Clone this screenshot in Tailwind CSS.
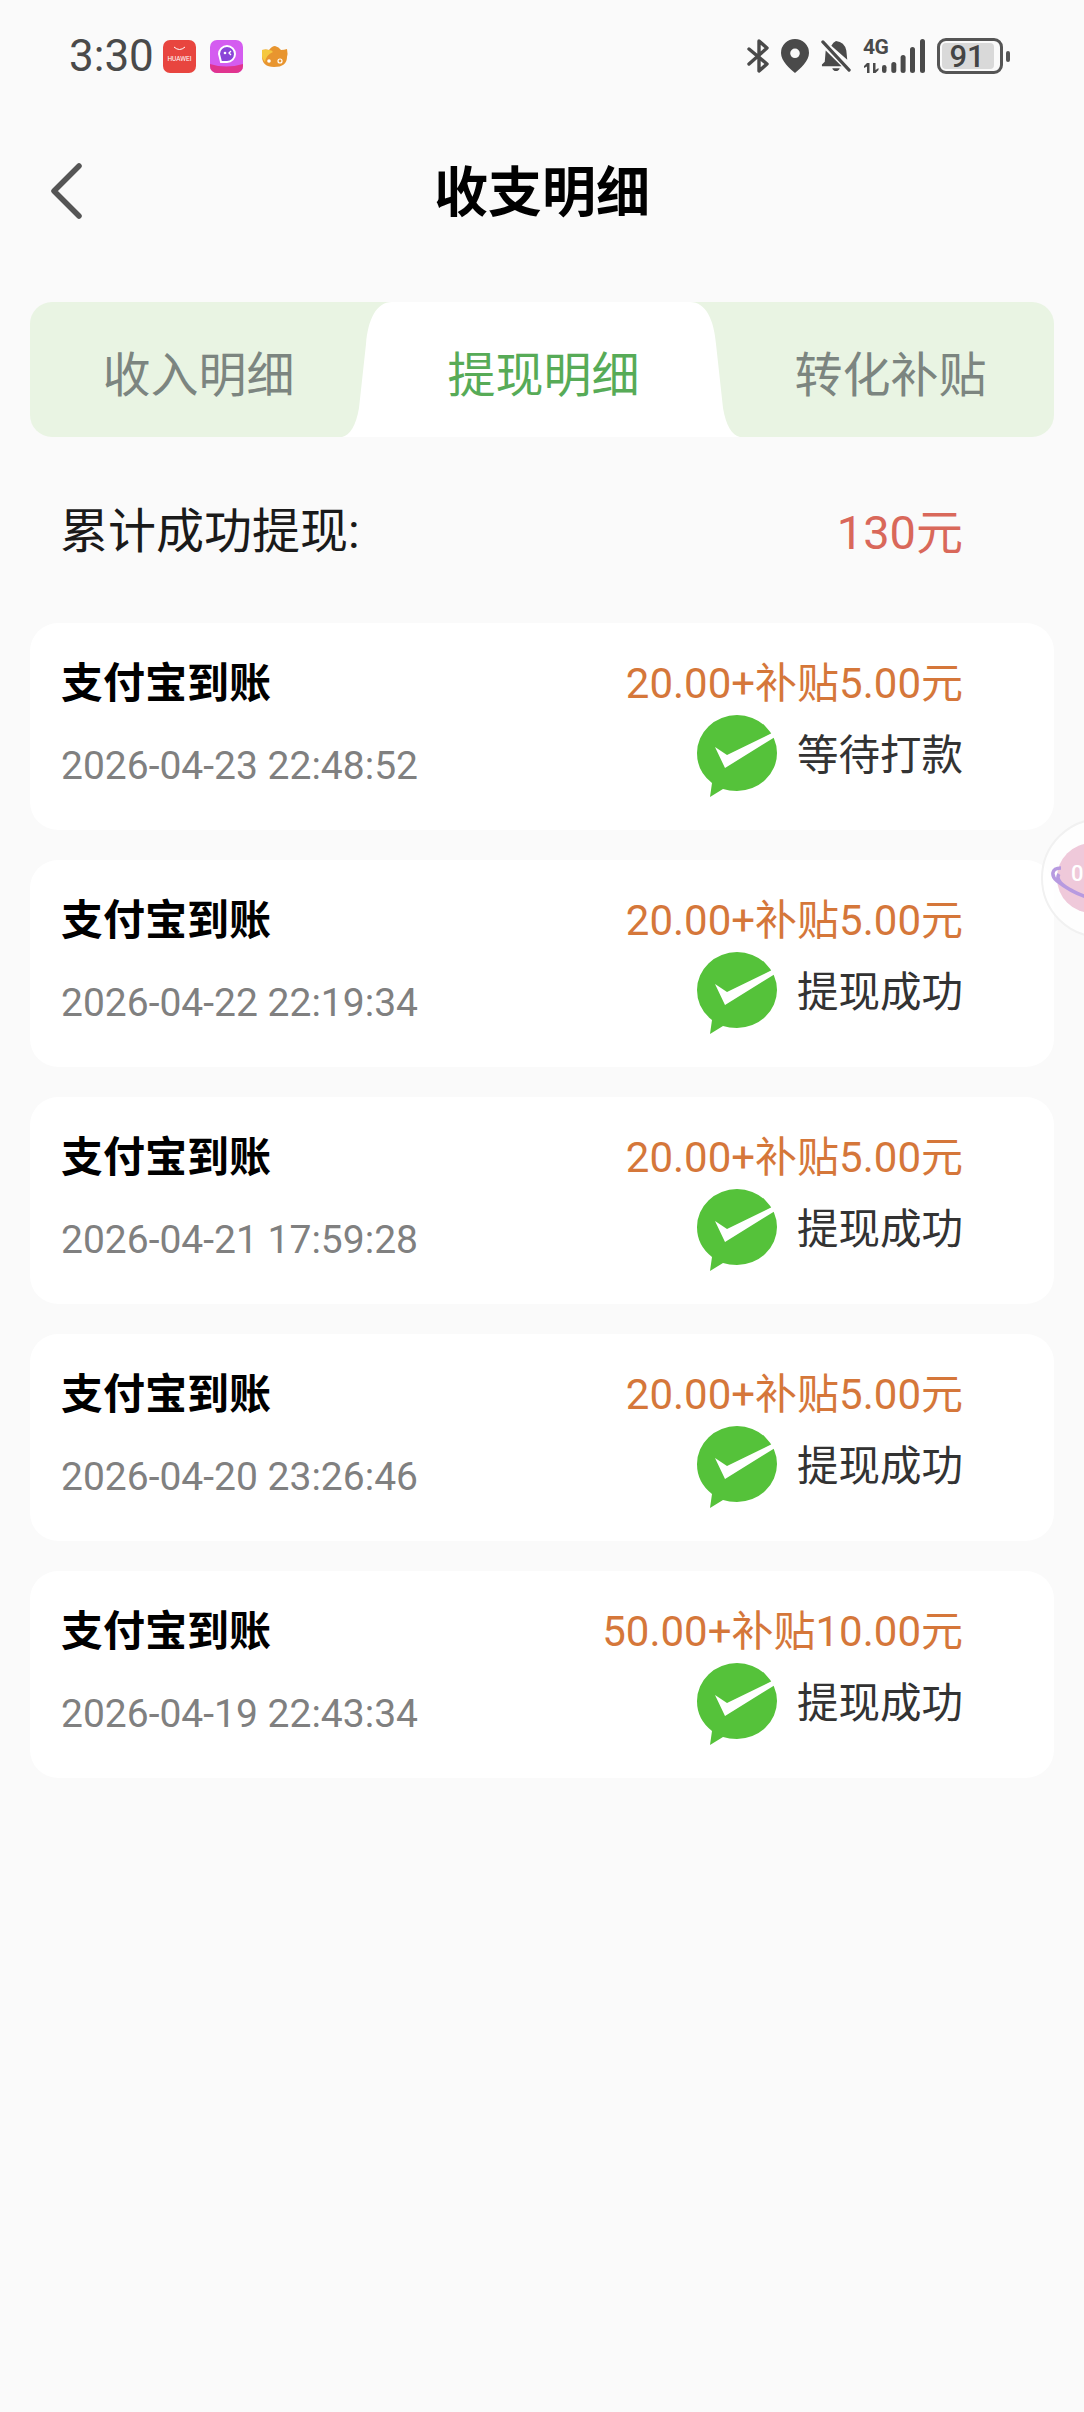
<!DOCTYPE html>
<html lang="zh-CN">
<head>
  <meta charset="UTF-8">
  <meta name="viewport" content="width=device-width, initial-scale=1.0">
  <title>收支明细</title>
  <script src="https://cdn.jsdelivr.net/npm/@tailwindcss/browser@4"></script>
</head>
<body class="bg-[#fafafa] font-['Roboto','Noto_Sans_CJK_SC',sans-serif]">
  <div class="relative w-[1084px] h-[2412px] overflow-hidden">

    <!-- status bar -->
    <div class="flex items-center justify-between h-[112px] pl-[69px] pr-[74px]">
      <div class="flex items-center">
        <span class="text-[44px] leading-none text-[#4a4a4a] w-[94px]">3:30</span>
        <svg class="w-[33px] h-[33px]" viewBox="0 0 33 33">
          <rect width="33" height="33" rx="7" fill="#e8453f"/>
          <path d="M11 7q5.500 5 11 0" fill="none" stroke="#fff" stroke-width="1"/>
          <text x="16.500" y="21" text-anchor="middle" font-size="6.500" font-family="Roboto" fill="#fff">HUAWEI</text>
        </svg>
        <svg class="w-[33px] h-[33px] ml-[14px]" viewBox="0 0 33 33">
          <rect width="33" height="33" rx="7" fill="#d45cf0"/>
          <path d="M0 24q16 5 33 0v2a7 7 0 0 1-7 7H7a7 7 0 0 1-7-7z" fill="#e0348f"/>
          <path d="M9 14a8 8 0 1 1 8 8h-6z" fill="#8a45d8" stroke="#fff" stroke-width="2"/>
          <circle cx="15" cy="13" r="1.300" fill="#fff"/><path d="M21 11l-2 2 2 2" fill="none" stroke="#fff" stroke-width="1.300"/>
        </svg>
        <svg class="w-[27px] h-[23px] ml-[18px]" viewBox="0 0 27 23">
          <path d="M1 5q4-1 7 0 3-4 6-4 4 1 6 4 3 0 6-1 1 5 0 8 0 10-13 10Q1 22 1 11z" fill="#e8952f"/>
          <path d="M1 5q4-1 7 0 3 0 4 2-7 3-8 10-3-4-3-6z" fill="#f5c83f"/>
          <circle cx="8" cy="16" r="1.800" fill="#fff"/><circle cx="19" cy="16" r="2" fill="none" stroke="#fff" stroke-width="1.200"/>
        </svg>
      </div>
      <div class="flex items-center gap-[12px]">
        <!-- bluetooth -->
        <svg class="w-[22px] h-[34px]" viewBox="0 0 22 34" fill="none" stroke="#4a4a4a" stroke-width="3.400" stroke-linecap="round" stroke-linejoin="round">
          <path d="M2 10l18 15-8 7V2l8 7L2 25"/>
        </svg>
        <!-- location -->
        <svg class="w-[28px] h-[34px]" viewBox="0 0 28 34">
          <path fill-rule="evenodd" fill="#4a4a4a" d="M14 0a14 14 0 0 1 14 14c0 8-9 16-14 20C9 30 0 22 0 14A14 14 0 0 1 14 0zm0 9.500a4.800 4.800 0 1 0 0 9.600 4.800 4.800 0 0 0 0-9.600z"/>
        </svg>
        <!-- muted bell -->
        <svg class="w-[30px] h-[34px]" viewBox="0 0 32 34">
          <path fill="#4a4a4a" d="M16 1q9 1 11 10l1 10-17-15q2-4 5-5zM5 11l17 17H1v-2l3-3z"/>
          <path fill="#4a4a4a" d="M12 30h8q-1 3-4 3t-4-3z"/>
          <path d="M2 2l28 30" stroke="#4a4a4a" stroke-width="3.400" stroke-linecap="round"/>
        </svg>
        <!-- 4G + signal -->
        <div class="relative w-[62px] h-[34px]">
          <span class="absolute left-0 top-[-3px] text-[21px] leading-[22px] font-bold text-[#4a4a4a] tracking-[-0.5px]">4G</span>
          <svg class="absolute left-0 bottom-0 w-[17px] h-[10px]" viewBox="0 0 17 10" fill="#4a4a4a">
            <path d="M4 0h2.500v10H4V3.500L1 5V3zM10 10h2.500V0H10zM12.500 7l3-2v2l-3 3z"/>
          </svg>
          <svg class="absolute right-0 bottom-0 w-[43px] h-[34px]" viewBox="0 0 43 34" fill="#4a4a4a">
            <rect x="0" y="26" width="4.500" height="8" rx="2.250"/>
            <rect x="9.300" y="23" width="5" height="11" rx="2.500"/>
            <rect x="18.600" y="16" width="5" height="18" rx="2.500"/>
            <rect x="28" y="8" width="5" height="26" rx="2.500"/>
            <rect x="38" y="0" width="5" height="34" rx="2.500"/>
          </svg>
        </div>
        <!-- battery -->
        <div class="flex items-center">
          <div class="relative w-[66px] h-[36px] rounded-[9px] border-[3px] border-[#555555] p-[2px]">
            <div class="w-[52px] h-full rounded-[4px] bg-[#d9d9d9]"></div>
            <span class="absolute inset-0 flex items-center justify-center text-[31px] leading-none font-medium text-[#444444] pr-[6px]">91</span>
          </div>
          <div class="w-[4px] h-[11px] ml-[3px] rounded-full bg-[#555555]"></div>
        </div>
      </div>
    </div>

    <!-- header -->
    <div class="relative flex items-center justify-center h-[160px] pt-[3px]">
      <svg class="absolute left-[50px] top-[51px] w-[33px] h-[56px]" viewBox="0 0 33 56" fill="none" stroke="#555555" stroke-width="5.500" stroke-linecap="round" stroke-linejoin="round">
        <path d="M29 3L4 28l25 25"/>
      </svg>
      <h1 class="text-[54px] leading-none font-bold text-black">收支明细</h1>
    </div>

    <!-- tabs -->
    <div class="relative flex h-[135px] mx-[30px] mt-[30px] rounded-[22px] bg-[#e9f4e3]">
      <svg class="absolute left-[312px] top-0 w-[398px] h-[135px]" viewBox="0 0 398 135" fill="#ffffff">
        <path d="M0 135C8 133 14 124 17 106L24 42C26 18 34 0 50 0H348C364 0 372 18 374 42L381 106C384 124 390 133 398 135z"/>
      </svg>
      <div class="relative flex-1 flex items-center justify-center pt-[12px] pl-[5px] text-[48px] leading-none text-[#7c8580]">收入明细</div>
      <div class="relative flex-1 flex items-center justify-center pt-[12px] pl-[18px] text-[48px] leading-none text-[#57ab57]">提现明细</div>
      <div class="relative flex-1 flex items-center justify-center pt-[12px] pl-[20px] text-[48px] leading-none text-[#7c8580]">转化补贴</div>
    </div>

    <!-- total -->
    <div class="flex items-center justify-between h-[124px] mt-[33px] pl-[60px] pr-[121px]">
      <span class="text-[48px] leading-none text-[#1a1a1a]">累计成功提现:</span>
      <span class="text-[47px] leading-none text-[#d9685a]">130元</span>
    </div>

    <!-- records -->
    <div class="flex flex-col gap-[30px] mx-[30px] mt-[29px]">
      <div class="h-[207px] rounded-[28px] bg-white pl-[31px] pr-[91px] pt-[39px]">
        <div class="flex items-center justify-between h-[44px]">
          <span class="text-[42px] leading-none font-bold text-black">支付宝到账</span>
          <span class="text-[42px] leading-none text-[#d5773a]">20.00+补贴5.00元</span>
        </div>
        <div class="flex items-center justify-between h-[82px] mt-[9px]">
          <span class="text-[39px] leading-none text-[#808080] mt-[21px]">2026-04-23 22:48:52</span>
          <span class="flex items-center gap-[20px] text-[41.500px] leading-none text-[#333333]">
            <svg class="w-[80px] h-[82px]" viewBox="0 0 80 82"><path fill="#55c23a" d="M40 0a40 38 0 0 1 0 76q-8 0-14-2l-13 8 2-14A39 38 0 0 1 0 38 40 38 0 0 1 40 0z"/><path fill="#ffffff" d="M18 32l12 8 45-22 3 4-50 31z"/></svg>
            等待打款
          </span>
        </div>
      </div>
      <div class="h-[207px] rounded-[28px] bg-white pl-[31px] pr-[91px] pt-[39px]">
        <div class="flex items-center justify-between h-[44px]">
          <span class="text-[42px] leading-none font-bold text-black">支付宝到账</span>
          <span class="text-[42px] leading-none text-[#d5773a]">20.00+补贴5.00元</span>
        </div>
        <div class="flex items-center justify-between h-[82px] mt-[9px]">
          <span class="text-[39px] leading-none text-[#808080] mt-[21px]">2026-04-22 22:19:34</span>
          <span class="flex items-center gap-[20px] text-[41.500px] leading-none text-[#333333]">
            <svg class="w-[80px] h-[82px]" viewBox="0 0 80 82"><path fill="#55c23a" d="M40 0a40 38 0 0 1 0 76q-8 0-14-2l-13 8 2-14A39 38 0 0 1 0 38 40 38 0 0 1 40 0z"/><path fill="#ffffff" d="M18 32l12 8 45-22 3 4-50 31z"/></svg>
            提现成功
          </span>
        </div>
      </div>
      <div class="h-[207px] rounded-[28px] bg-white pl-[31px] pr-[91px] pt-[39px]">
        <div class="flex items-center justify-between h-[44px]">
          <span class="text-[42px] leading-none font-bold text-black">支付宝到账</span>
          <span class="text-[42px] leading-none text-[#d5773a]">20.00+补贴5.00元</span>
        </div>
        <div class="flex items-center justify-between h-[82px] mt-[9px]">
          <span class="text-[39px] leading-none text-[#808080] mt-[21px]">2026-04-21 17:59:28</span>
          <span class="flex items-center gap-[20px] text-[41.500px] leading-none text-[#333333]">
            <svg class="w-[80px] h-[82px]" viewBox="0 0 80 82"><path fill="#55c23a" d="M40 0a40 38 0 0 1 0 76q-8 0-14-2l-13 8 2-14A39 38 0 0 1 0 38 40 38 0 0 1 40 0z"/><path fill="#ffffff" d="M18 32l12 8 45-22 3 4-50 31z"/></svg>
            提现成功
          </span>
        </div>
      </div>
      <div class="h-[207px] rounded-[28px] bg-white pl-[31px] pr-[91px] pt-[39px]">
        <div class="flex items-center justify-between h-[44px]">
          <span class="text-[42px] leading-none font-bold text-black">支付宝到账</span>
          <span class="text-[42px] leading-none text-[#d5773a]">20.00+补贴5.00元</span>
        </div>
        <div class="flex items-center justify-between h-[82px] mt-[9px]">
          <span class="text-[39px] leading-none text-[#808080] mt-[21px]">2026-04-20 23:26:46</span>
          <span class="flex items-center gap-[20px] text-[41.500px] leading-none text-[#333333]">
            <svg class="w-[80px] h-[82px]" viewBox="0 0 80 82"><path fill="#55c23a" d="M40 0a40 38 0 0 1 0 76q-8 0-14-2l-13 8 2-14A39 38 0 0 1 0 38 40 38 0 0 1 40 0z"/><path fill="#ffffff" d="M18 32l12 8 45-22 3 4-50 31z"/></svg>
            提现成功
          </span>
        </div>
      </div>
      <div class="h-[207px] rounded-[28px] bg-white pl-[31px] pr-[91px] pt-[39px]">
        <div class="flex items-center justify-between h-[44px]">
          <span class="text-[42px] leading-none font-bold text-black">支付宝到账</span>
          <span class="text-[42px] leading-none text-[#d5773a]">50.00+补贴10.00元</span>
        </div>
        <div class="flex items-center justify-between h-[82px] mt-[9px]">
          <span class="text-[39px] leading-none text-[#808080] mt-[21px]">2026-04-19 22:43:34</span>
          <span class="flex items-center gap-[20px] text-[41.500px] leading-none text-[#333333]">
            <svg class="w-[80px] h-[82px]" viewBox="0 0 80 82"><path fill="#55c23a" d="M40 0a40 38 0 0 1 0 76q-8 0-14-2l-13 8 2-14A39 38 0 0 1 0 38 40 38 0 0 1 40 0z"/><path fill="#ffffff" d="M18 32l12 8 45-22 3 4-50 31z"/></svg>
            提现成功
          </span>
        </div>
      </div>
    </div>

    <!-- floating bubble -->
    <div class="absolute left-[1041px] top-[818px] w-[120px] h-[120px] rounded-full bg-white/70 border-[2px] border-[#f1f1f1]">
      <div class="absolute left-[14px] top-[23px] w-[70px] h-[70px] rounded-full bg-[#efc9da]"></div>
      <span class="absolute left-[28px] top-[43px] text-[22px] leading-none font-medium text-white">0</span>
      <svg class="absolute left-[6px] top-[46px] w-[44px] h-[36px]" viewBox="0 0 44 36" fill="none" stroke="#b79ae0" stroke-width="3.500"><path d="M12 2C2 2 2 10 8 15s20 14 36 18M10 8C6 14 14 20 24 25"/></svg>
    </div>
  </div>
</body>
</html>
